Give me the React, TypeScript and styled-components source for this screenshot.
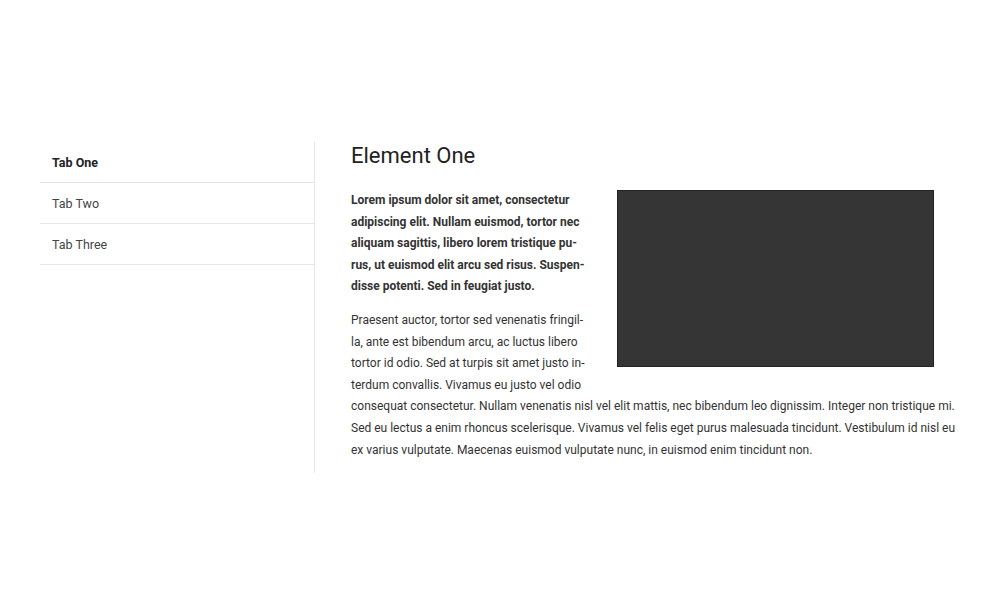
import React from "react";
import styled, { createGlobalStyle } from "styled-components";

const Global = createGlobalStyle`
  html, body { margin: 0; padding: 0; background: #fff; }
  body { font-family: Roboto, "Liberation Sans", sans-serif; color: #333; }
`;

const Page = styled.div`
  width: 1000px;
  height: 610px;
  box-sizing: border-box;
  padding: 141px 40px 0;
`;

const Layout = styled.div`
  display: flex;
  align-items: stretch;
`;

const TabList = styled.ul`
  list-style: none;
  margin: 1px 0 0;
  padding: 0;
  width: 274px;
  flex: none;
  border-right: 1px solid #e6e6e6;
`;

const Tab = styled.li<{ $active?: boolean }>`
  height: 40px;
  display: flex;
  align-items: center;
  padding: 0 12px;
  border-bottom: 1px solid #e6e6e6;
  font-size: 12.5px;
  color: ${(p) => (p.$active ? "#222" : "#444")};
  font-weight: ${(p) => (p.$active ? 700 : 400)};
`;

const Panel = styled.div`
  flex: 1;
  padding: 0 0 0 36px;
`;

const Title = styled.h2`
  margin: 0 0 19px;
  font-size: 22px;
  line-height: 30px;
  font-weight: 400;
  color: #222;
`;

const Media = styled.div`
  float: right;
  width: 317px;
  height: 177px;
  margin: 0 26px 16px 32px;
  background: #353535;
  border: 1px solid #222;
  box-sizing: border-box;
`;

const Para = styled.p<{ $bold?: boolean }>`
  margin: 0 0 12px;
  font-size: 12px;
  line-height: 21.6px;
  color: #333;
  font-weight: ${(p) => (p.$bold ? 700 : 400)};
`;

const S = "\u00AD";

export default function App() {
  return (
    <Page>
      <Global />
      <Layout>
        <TabList>
          <Tab $active>Tab One</Tab>
          <Tab>Tab Two</Tab>
          <Tab>Tab Three</Tab>
        </TabList>
        <Panel>
          <Title>Element One</Title>
          <Media />
          <Para $bold>
            Lorem ipsum dolor sit amet, consectetur adipiscing elit. Nullam euismod, tortor nec aliquam sagittis, libero lorem tristique pu{S}rus, ut euismod elit arcu sed risus. Suspen{S}disse potenti. Sed in feugiat justo.
          </Para>
          <Para>
            Praesent auctor, tortor sed venenatis fringil{S}la, ante est bibendum arcu, ac luctus libero tortor id odio. Sed at turpis sit amet justo in{S}terdum convallis. Vivamus eu justo vel odio consequat consectetur. Nullam venenatis nisl vel elit mattis, nec bibendum leo dignissim. Integer non tristique mi. Sed eu lectus a enim rhoncus scelerisque. Vivamus vel felis eget purus malesuada tincidunt. Vestibulum id nisl eu ex varius vulputate. Maecenas euismod vulputate nunc, in euismod enim tincidunt non.
          </Para>
        </Panel>
      </Layout>
    </Page>
  );
}
